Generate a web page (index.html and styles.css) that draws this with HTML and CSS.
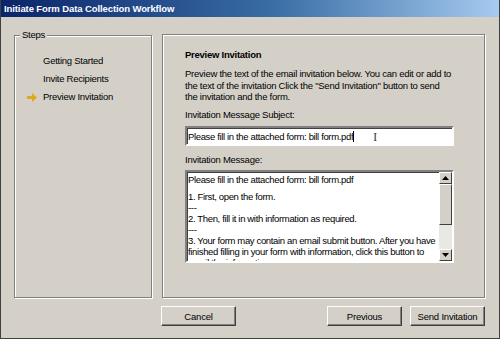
FILE: index.html
```html
<!DOCTYPE html>
<html lang="en">
<head>
    <meta charset="UTF-8">
    <meta name="viewport" content="width=device-width, initial-scale=1.0">
    <title>Initiate Form Data Collection Workflow</title>
    <link rel="stylesheet" href="styles.css">
</head>
<body>

    <div class="window">
        <div class="titlebar">Initiate Form Data Collection Workflow</div>

        <div class="content">
            <div class="steps">
                <span class="steps-label">Steps</span>
                <ul>
                    <li>Getting Started</li>
                    <li>Invite Recipients</li>
                    <li class="current">
                        <svg class="arrow" width="10" height="9" viewBox="0 0 10 9">
                            <path d="M0 3h5V0l5 4.5L5 9V6H0z" fill="#e0a820"/>
                        </svg>
                        Preview Invitation
                    </li>
                </ul>
            </div>

            <div class="panel">
                <h3>Preview Invitation</h3>
                <p class="intro">Preview the text of the email invitation below. You can edit or add to the text of the invitation Click the "Send Invitation" button to send the invitation and the form.</p>

                <label>Invitation Message Subject:</label>
                <div class="subject">
                    Please fill in the attached form: bill form.pdf<span class="caret"></span>
                    <span class="ibeam">I</span>
                </div>

                <label>Invitation Message:</label>
                <div class="message">
                    <div class="message-text">
                        <p>Please fill in the attached form: bill form.pdf</p>
                        <p class="gap">1. First, open the form.</p>
                        <p>---</p>
                        <p>2. Then, fill it in with information as required.</p>
                        <p>---</p>
                        <p>3. Your form may contain an email submit button. After you have finished filling in your form with information, click this button to email the information.</p>
                    </div>
                    <div class="scrollbar">
                        <div class="sb-btn">
                            <svg width="7" height="4" viewBox="0 0 7 4"><path d="M3.5 0L7 4H0z" fill="#000"/></svg>
                        </div>
                        <div class="sb-thumb"></div>
                        <div class="sb-track"></div>
                        <div class="sb-btn">
                            <svg width="7" height="4" viewBox="0 0 7 4"><path d="M0 0h7L3.5 4z" fill="#000"/></svg>
                        </div>
                    </div>
                </div>
            </div>
        </div>

        <div class="footer">
            <button class="cancel">Cancel</button>
            <div class="nav">
                <button>Previous</button>
                <button>Send Invitation</button>
            </div>
        </div>
    </div>

</body>
</html>
```

FILE: styles.css
```css
body {
    margin: 0;
    padding: 0;
    background: #d4d0c8;
    font-family: "Liberation Sans", Arial, sans-serif;
    font-size: 9.5px;
    letter-spacing: -0.25px;
    color: #000;
}

.window {
    width: 500px;
    height: 339px;
    box-sizing: border-box;
    border: 1px solid #404040;
    border-top: none;
    background: #d4d0c8;
    display: flex;
    flex-direction: column;
}

.titlebar {
    height: 17px;
    line-height: 17px;
    padding-left: 3px;
    background: linear-gradient(to right, #0a246a, #3a6ea5 55%, #a6caf0);
    color: white;
    font-weight: bold;
    font-size: 9.5px;
    letter-spacing: -0.1px;
}

.content {
    display: flex;
    gap: 10px;
    padding: 18px 14px 0 13px;
}

.steps,
.panel {
    position: relative;
    box-sizing: border-box;
    height: 263px;
    border: 1px solid #808080;
    box-shadow: 1px 1px 0 #fff, inset 1px 1px 0 #fff;
}

.steps {
    width: 138px;
}

.steps-label {
    position: absolute;
    left: 5px;
    top: -7px;
    padding: 0 2px;
    background: #d4d0c8;
    line-height: 12px;
}

.steps ul {
    list-style: none;
    margin: 0;
    padding: 16px 0 0 28px;
}

.steps li {
    position: relative;
    height: 18px;
    line-height: 18px;
}

.steps .arrow {
    position: absolute;
    left: -16px;
    top: 5px;
}

.panel {
    flex: 1;
    margin-top: -1px;
    height: 264px;
    padding: 14px 30px 0 22px;
}

.panel h3 {
    margin: 0 0 8px 0;
    font-size: 9.5px;
    font-weight: bold;
}

.intro {
    margin: 0 0 6px 0;
    line-height: 11.5px;
}

.panel label {
    display: block;
    margin-bottom: 6px;
}

.subject {
    position: relative;
    height: 20px;
    line-height: 17px;
    box-sizing: border-box;
    background: white;
    border: 2px solid;
    border-color: #808080 #fff #fff #808080;
    box-shadow: inset 1px 1px 0 #404040;
    padding-left: 1px;
    margin-bottom: 8px;
    white-space: nowrap;
    letter-spacing: -0.35px;
}

.caret {
    display: inline-block;
    width: 1px;
    height: 11px;
    background: #000;
    vertical-align: -2px;
}

.ibeam {
    position: absolute;
    left: 186px;
    top: 0;
    font-family: "Liberation Serif", serif;
    font-size: 13px;
    color: #444;
}

.message {
    display: flex;
    height: 93px;
    margin-top: -1px;
    box-sizing: border-box;
    background: white;
    border: 2px solid;
    border-color: #808080 #fff #fff #808080;
    box-shadow: inset 1px 1px 0 #404040;
    overflow: hidden;
}

.message-text {
    flex: 1;
    padding: 2px 1px 0 1px;
    line-height: 11px;
    letter-spacing: -0.35px;
}

.message-text p {
    margin: 0;
}

.message-text .gap {
    margin-top: 6px;
}

.scrollbar {
    width: 13px;
    display: flex;
    flex-direction: column;
    background: #eae8e3;
}

.sb-btn,
.sb-thumb {
    background: #d4d0c8;
    box-sizing: border-box;
    border: 1px solid;
    border-color: #fff #404040 #404040 #fff;
}

.sb-btn {
    height: 12px;
    display: flex;
    align-items: center;
    justify-content: center;
}

.sb-thumb {
    height: 41px;
}

.sb-track {
    flex: 1;
}

.footer {
    display: flex;
    justify-content: space-between;
    padding: 8px 14px 0 160px;
}

.nav {
    display: flex;
    gap: 8px;
}

button {
    width: 75px;
    height: 20px;
    padding: 0;
    font-family: "Liberation Sans", Arial, sans-serif;
    font-size: 9.5px;
    letter-spacing: -0.2px;
    color: #000;
    background: #d4d0c8;
    border: 1px solid;
    border-color: #fff #404040 #404040 #fff;
    box-shadow: inset -1px -1px 0 #808080;
}
```
